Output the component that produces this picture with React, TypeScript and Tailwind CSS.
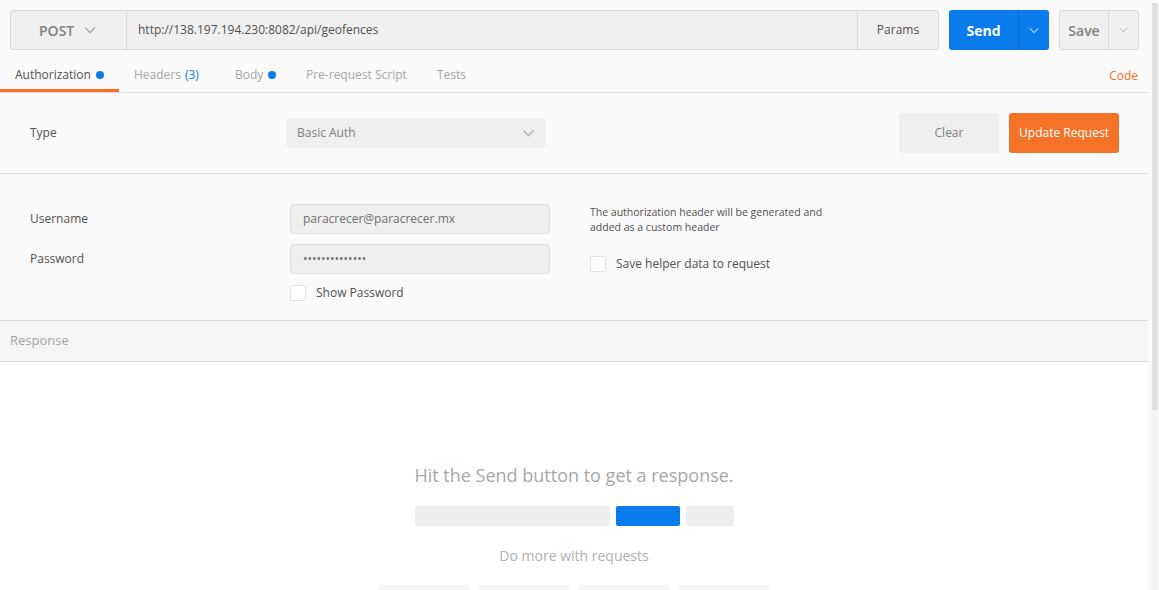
const font = { fontFamily: '"Open Sans", "Noto Sans", sans-serif' };

function Chevron({ className }: { className?: string }) {
  return (
    <svg viewBox="0 0 12 8" className={className} fill="none" stroke="currentColor" strokeWidth="1.3">
      <path d="M1 1.5 L6 6.5 L11 1.5" />
    </svg>
  );
}

function Checkbox() {
  return <span className="inline-block h-[16px] w-[16px] rounded-[2px] border border-[#e3e3e3] bg-white" />;
}

const tabs = [
  { label: "Authorization", w: "w-[119px]", active: true, dot: true },
  { label: "Headers", w: "w-[101px]", count: "(3)" },
  { label: "Body", w: "w-[71px]", dot: true },
  { label: "Pre-request Script", w: "w-[131px]" },
  { label: "Tests", w: "w-[60px]" },
];

export default function App() {
  return (
    <div className="flex h-[590px] w-[1159px] overflow-hidden bg-[#fafafa] text-[#505050]" style={font}>
      <main className="flex w-[1148px] flex-col overflow-hidden">
        {/* request bar */}
        <div className="flex h-[50px] shrink-0 items-end pl-[10px]">
          <div className="flex h-[40px] w-[929px] rounded-[3px] border border-[#d9d9d9] bg-[#f0f0f0]">
            <div className="flex w-[116px] items-center border-r border-[#d9d9d9] pl-[28px]">
              <span className="text-[14px] font-semibold text-[#808080]">POST</span>
              <Chevron className="ml-[10px] h-[8px] w-[12px] text-[#a8a8a8]" />
            </div>
            <div className="flex flex-1 items-center pl-[11px] text-[12px] text-[#505050]">
              http://138.197.194.230:8082/api/geofences
            </div>
            <div className="flex w-[81px] items-center justify-center border-l border-[#d9d9d9] text-[12px] text-[#505050]">
              Params
            </div>
          </div>
          <div className="ml-[10px] flex h-[40px] w-[100px] rounded-[3px] bg-[#097bed]">
            <div className="flex w-[69px] items-center justify-center text-[14px] font-bold text-white">Send</div>
            <div className="flex flex-1 items-center justify-center border-l border-[#0868c9]">
              <Chevron className="h-[7px] w-[10px] text-[#b8d8fa]" />
            </div>
          </div>
          <div className="ml-[10px] flex h-[40px] w-[80px] rounded-[3px] border border-[#d9d9d9] bg-[#f0f0f0]">
            <div className="flex w-[48px] items-center justify-center text-[14px] font-semibold text-[#808080]">Save</div>
            <div className="flex flex-1 items-center justify-center border-l border-[#d9d9d9]">
              <Chevron className="h-[6px] w-[9px] text-[#b0b0b0]" />
            </div>
          </div>
        </div>

        {/* tabs */}
        <div className="flex h-[43px] shrink-0 border-b border-[#dcdcdc]">
          {tabs.map((t) => (
            <div
              key={t.label}
              className={`${t.w} flex items-start pl-[15px] pt-[17px] text-[12px] leading-[16px] ${
                t.active ? "border-b-[3px] border-[#f47023] text-[#505050]" : "text-[#a6a6a6]"
              }`}
            >
              <span>{t.label}</span>
              {t.count && <span className="ml-[4px] text-[#097bed]">{t.count}</span>}
              {t.dot && <span className="ml-[5px] mt-[4px] h-[8px] w-[8px] rounded-full bg-[#097bed]" />}
            </div>
          ))}
          <div className="flex-1" />
          <div className="pr-[10px] pt-[18px] text-[12px] leading-[16px] text-[#f47023]">Code</div>
        </div>

        {/* type row */}
        <div className="flex h-[81px] shrink-0 items-center border-b border-[#dcdcdc] pl-[30px] pr-[29px]">
          <div className="w-[257px] text-[12px]">Type</div>
          <div className="flex h-[30px] w-[258px] items-center justify-between rounded-[3px] bg-[#efefef] pl-[10px] pr-[10px] text-[12px] text-[#808080]">
            <span>Basic Auth</span>
            <Chevron className="h-[8px] w-[13px] text-[#b0b0b0]" />
          </div>
          <div className="flex-1" />
          <div className="flex h-[40px] w-[100px] items-center justify-center rounded-[3px] bg-[#efefef] text-[12px] text-[#808080]">
            Clear
          </div>
          <div className="ml-[10px] flex h-[40px] w-[110px] items-center justify-center rounded-[3px] bg-[#f47328] text-[12px] text-white">
            Update Request
          </div>
        </div>

        {/* credentials */}
        <div className="flex h-[146px] shrink-0 pl-[30px] pt-[30px]">
          <div className="flex flex-col">
            <div className="flex h-[30px] items-center">
              <span className="w-[260px] text-[12px]">Username</span>
              <div className="flex h-[30px] w-[260px] items-center rounded-[3px] border border-[#dedede] bg-[#efefef] pl-[12px] text-[12px] text-[#707070]">
                paracrecer@paracrecer.mx
              </div>
            </div>
            <div className="mt-[10px] flex h-[30px] items-center">
              <span className="w-[260px] text-[12px]">Password</span>
              <div className="flex h-[30px] w-[260px] items-center rounded-[3px] border border-[#dedede] bg-[#efefef] pl-[12px] text-[12px] text-[#707070]">
                ••••••••••••••
              </div>
            </div>
            <div className="ml-[260px] mt-[10px] flex items-center">
              <Checkbox />
              <span className="ml-[10px] text-[12px]">Show Password</span>
            </div>
          </div>
          <div className="ml-[40px] flex flex-col">
            <div className="pt-[1px] text-[10.5px] leading-[15px]">
              The authorization header will be generated and
              <br />
              added as a custom header
            </div>
            <div className="mt-[20px] flex items-center">
              <Checkbox />
              <span className="ml-[10px] text-[12px]">Save helper data to request</span>
            </div>
          </div>
        </div>

        {/* response header */}
        <div className="flex h-[42px] shrink-0 items-center border-y border-[#dcdcdc] bg-[#f5f5f5] pl-[10px] text-[13px] text-[#a3a3a3]">
          Response
        </div>

        {/* empty response */}
        <div className="flex min-h-0 flex-1 flex-col items-center overflow-hidden bg-white pt-[101px]">
          <div className="shrink-0 text-[18px] leading-[24px] text-[#a8a8a8]">Hit the Send button to get a response.</div>
          <div className="mt-[19px] flex shrink-0 gap-[6px]">
            <div className="h-[20px] w-[195px] rounded-[2px] bg-[#eeeeee]" />
            <div className="h-[20px] w-[64px] rounded-[2px] bg-[#097bed]" />
            <div className="h-[20px] w-[48px] rounded-[2px] bg-[#eeeeee]" />
          </div>
          <div className="mt-[20px] shrink-0 text-[14px] leading-[20px] text-[#b0b0b0]">Do more with requests</div>
          <div className="mt-[19px] flex shrink-0 gap-[10px]">
            <div className="h-[40px] w-[90px] rounded-[3px] bg-[#f5f5f5]" />
            <div className="h-[40px] w-[90px] rounded-[3px] bg-[#f5f5f5]" />
            <div className="h-[40px] w-[90px] rounded-[3px] bg-[#f5f5f5]" />
            <div className="h-[40px] w-[90px] rounded-[3px] bg-[#f5f5f5]" />
          </div>
        </div>
      </main>

      {/* scrollbar */}
      <div className="flex w-[11px] flex-col bg-[#fafafa] pl-[4px] pr-[1px] pt-[3px]">
        <div className="h-[407px] w-[6px] bg-[#e0e0e0]" />
        <div className="w-[6px] flex-1 bg-[#f4f4f4]" />
      </div>
    </div>
  );
}
